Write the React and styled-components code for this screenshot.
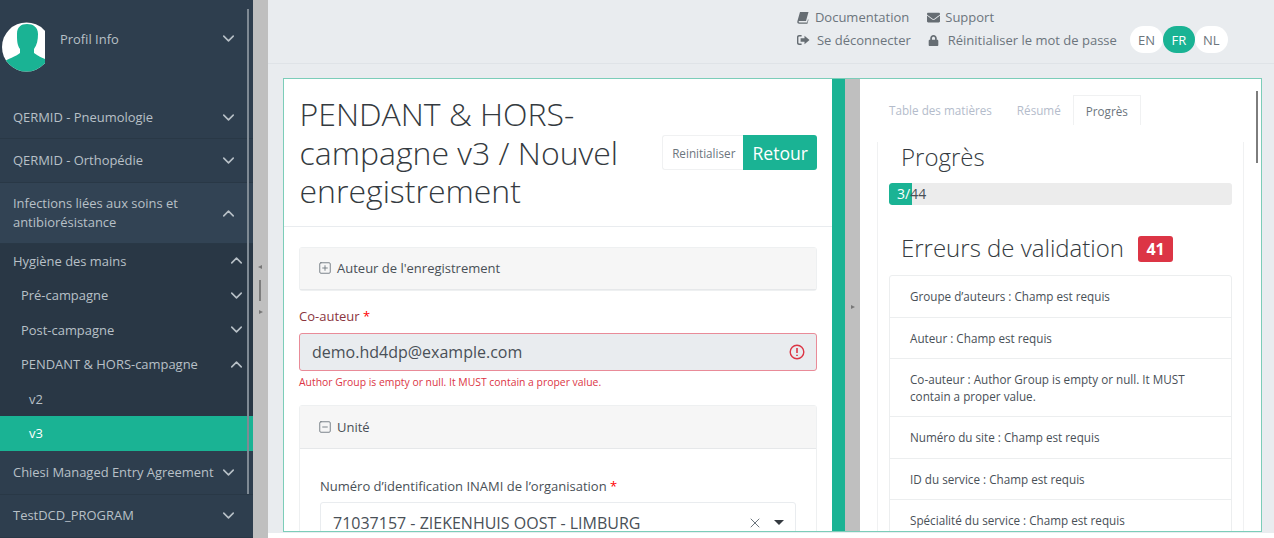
import React from "react";
import styled, { createGlobalStyle } from "styled-components";
import { ChevronDown, ChevronUp, SquarePlus, SquareMinus, X } from "lucide-react";
import { FaEnvelope, FaLock } from "react-icons/fa";

const Global = createGlobalStyle`
  html, body { margin: 0; padding: 0; height: 538px; overflow: hidden; background: #fff; }
  * { box-sizing: border-box; }
  body { font-family: "Open Sans", "Liberation Sans", sans-serif; color: #495057; }
`;

const Page = styled.div`
  display: flex;
  width: 1274px;
  height: 538px;
  overflow: hidden;
`;

const Sidebar = styled.nav`
  position: relative;
  flex: 0 0 253px;
  height: 538px;
  background: #2e3e4e;
  color: #b8c0c7;
  font-size: 12.95px;
  overflow: hidden;
`;

const Thumb = styled.div`
  position: absolute;
  top: 9px;
  right: 4px;
  width: 2px;
  height: 485px;
  background: #7f8a94;
`;

const Profile = styled.div`
  display: flex;
  align-items: center;
  height: 97px;
  padding: 0 15px 20px 2px;
`;

const Avatar = styled.svg`
  flex: none;
  width: 43px;
  height: 50px;
  margin: 16px 15px 0 0;
`;

const ProfileName = styled.span`
  flex: 1;
`;

const Group = styled.div`
  display: flex;
  align-items: center;
  justify-content: space-between;
  min-height: ${(p) => p.$h || 43}px;
  padding: ${(p) => (p.$open ? 1 : 0)}px 15px 0 13px;
  line-height: 19px;
  border-bottom: 1px solid #293846;
  background: ${(p) => (p.$open ? "#324354" : "transparent")};
`;

const GroupLabel = styled.span`
  max-width: 190px;
  white-space: ${(p) => (p.$nowrap ? "nowrap" : "normal")};
`;

const Sub = styled.div`
  background: #293745;
`;

const SubRow = styled.div`
  display: flex;
  align-items: center;
  justify-content: space-between;
  height: 34.5px;
  padding: 0 7px 0 ${(p) => p.$indent}px;
  background: ${(p) => (p.$active ? "#1ab394" : "transparent")};
  color: ${(p) => (p.$active ? "#fff" : "#b8c0c7")};
`;

const Gutter = styled.div`
  position: relative;
  flex: 0 0 15px;
  background: #bfbfbf;
`;

const Arrow = styled.span`
  position: absolute;
  left: ${(p) => p.$left}px;
  top: ${(p) => p.$top}px;
  width: 0;
  height: 0;
  border-top: 2.5px solid transparent;
  border-bottom: 2.5px solid transparent;
  ${(p) => (p.$dir === "left" ? "border-right: 4px solid #777;" : "border-left: 4px solid #777;")}
`;

const Handle = styled.span`
  position: absolute;
  left: 6px;
  top: 280px;
  width: 2px;
  height: 21px;
  background: #7d7d7d;
`;

const Main = styled.div`
  flex: 1;
  display: flex;
  flex-direction: column;
  min-width: 0;
  height: 533px;
  background: #e9ecef;
`;

const Header = styled.header`
  flex: 0 0 64px;
  display: flex;
  justify-content: flex-end;
  align-items: center;
  padding: 0 46.5px 6px 0;
  border-bottom: 1px solid #dfe3e7;
  font-size: 13px;
  color: #6c757d;
`;

const Links = styled.div`
  display: flex;
  flex-direction: column;
  gap: 5px;
  margin-right: 13.5px;
`;

const LinkRow = styled.div`
  display: flex;
  align-items: center;
  height: 18px;
`;

const TopLink = styled.span`
  display: inline-flex;
  align-items: center;
  gap: ${(p) => p.$gap || 6}px;
  margin-right: ${(p) => p.$mr || 0}px;
  white-space: nowrap;
  svg { flex: none; color: #666d73; }
`;

const Lang = styled.div`
  display: flex;
  margin-top: 22px;
`;

const LangBtn = styled.span`
  display: flex;
  align-items: center;
  justify-content: center;
  width: 32.4px;
  height: 27px;
  border-radius: 14px;
  font-size: 13px;
  background: ${(p) => (p.$on ? "#1ab394" : "#fff")};
  color: ${(p) => (p.$on ? "#fff" : "#6c757d")};
  position: relative;
  z-index: ${(p) => (p.$on ? 1 : 0)};
`;

const Frame = styled.div`
  display: flex;
  margin: 14px 12px 0 15px;
  height: 454px;
  border: 1px solid #7ccdb9;
  background: #fff;
  overflow: hidden;
`;

const Left = styled.section`
  flex: 0 0 548px;
  overflow: hidden;
`;

const TitleBar = styled.div`
  display: flex;
  align-items: center;
  justify-content: space-between;
  height: 148px;
  padding: 1px 15px 0 15.5px;
  border-bottom: 1px solid #e9ecef;
`;

const Title = styled.h1`
  margin: 0;
  width: 340px;
  font-size: 32px;
  font-weight: 300;
  line-height: 38.4px;
  color: #343a40;
`;

const Actions = styled.div`
  display: flex;
  height: 35px;
  margin-top: -1px;
`;

const ResetBtn = styled.span`
  display: flex;
  align-items: center;
  padding: 0 8px 0 9px;
  font-size: 11.7px;
  border: 1px solid #f0f1f2;
  border-right: none;
  border-radius: 3px 0 0 3px;
  color: #6c757d;
`;

const BackBtn = styled.span`
  display: flex;
  align-items: center;
  padding: 0 9px;
  font-size: 17.6px;
  background: #1ab394;
  color: #fff;
  border-radius: 0 3px 3px 0;
`;

const Form = styled.div`
  padding: 20px 15px 0 15px;
`;

const Card = styled.div`
  border: 1px solid #eef0f1;
  border-radius: 3px;
  background: #fff;
`;

const CardHead = styled.div`
  display: flex;
  align-items: center;
  gap: 5px;
  height: ${(p) => p.$h}px;
  padding: 0 18px 1px;
  background: #f6f6f6;
  border-bottom: 1px solid #e6e8ea;
  font-size: 13px;
  color: #495057;
  svg { color: #6c757d; }
`;

const FieldLabel = styled.div`
  margin: 16px 0 ${(p) => (p.$err ? 8 : 7)}px;
  font-size: 13px;
  line-height: 18px;
  color: ${(p) => (p.$err ? "#8a3540" : "#495057")};
`;

const Star = styled.span`
  color: #f00;
`;

const ErrInput = styled.div`
  display: flex;
  align-items: center;
  justify-content: space-between;
  height: 38px;
  padding: 0 11px 0 12px;
  background: #e9ecef;
  border: 1px solid #e98b98;
  border-radius: 3px;
  font-size: 16px;
  color: #495057;
`;

const ErrMsg = styled.div`
  margin: 3px 0 15px;
  font-size: 10.4px;
  line-height: 16px;
  color: #dc3545;
`;

const CardBody = styled.div`
  padding: 12px 20px 0;
  height: 200px;
`;

const Select = styled.div`
  display: flex;
  align-items: center;
  height: 38px;
  padding: 3px 11px 0 12px;
  border: 1px solid #e9ecef;
  border-radius: 3px;
  font-size: 16px;
  color: #495057;
  white-space: nowrap;
`;

const SelectText = styled.span`
  flex: 1;
`;

const Caret = styled.span`
  margin-left: 11px;
  width: 0;
  height: 0;
  border-left: 5px solid transparent;
  border-right: 5px solid transparent;
  border-top: 5px solid #343a40;
`;

const GreenBar = styled.div`
  flex: 0 0 13px;
  background: #1ab394;
`;

const GrayBar = styled.div`
  position: relative;
  flex: 0 0 15px;
  background: #bfbfbf;
`;

const Right = styled.section`
  position: relative;
  flex: 1;
  min-width: 0;
  padding: 16px 17px 0 17px;
  overflow: hidden;
`;

const RightThumb = styled.div`
  position: absolute;
  top: 12px;
  right: 3px;
  width: 2.5px;
  height: 72px;
  background: #7d7d7d;
`;

const Tabs = styled.div`
  display: flex;
  align-items: flex-end;
  height: 30px;
  font-size: 11.7px;
`;

const Tab = styled.span`
  display: flex;
  align-items: center;
  height: 30px;
  padding: 0 ${(p) => (p.$first ? 13 : 12)}px 0 12px;
  color: ${(p) => (p.$on ? "#6c757d" : "#b4bccb")};
  background: #fff;
  ${(p) => p.$on && "border: 1px solid #f0f1f2; border-bottom: none;"}
`;

const TabBody = styled.div`
  height: 500px;
  padding: 0 11px;
  border-left: 1px solid #f0f1f2;
  border-right: 1px solid #f0f1f2;
`;

const H2 = styled.h2`
  display: flex;
  align-items: flex-start;
  margin: ${(p) => p.$top}px 0 0;
  padding-left: 12px;
  font-size: 24px;
  font-weight: 300;
  color: #343a40;
  line-height: 29px;
`;

const Progress = styled.div`
  position: relative;
  height: 22px;
  margin-top: 12px;
  background: #ececec;
  border-radius: 3px;
  font-size: 14px;
  line-height: 22px;
  overflow: hidden;
`;

const ProgressFill = styled.div`
  height: 100%;
  background: #1ab394;
  border-radius: 3px 0 0 3px;
`;

const ProgressText = styled.span`
  position: absolute;
  left: 8px;
  top: 0;
  color: #495057;
`;

const ProgressDone = styled.span`
  color: #fff;
`;

const Badge = styled.span`
  display: inline-flex;
  align-items: center;
  justify-content: center;
  width: 35px;
  height: 26px;
  margin: 3px 0 0 14px;
  border-radius: 3px;
  background: #dc3545;
  color: #fff;
  font-size: 16px;
  font-weight: 700;
`;

const ErrList = styled.ul`
  margin: 13px 0 0;
  padding: 0;
  list-style: none;
  border: 1px solid #eceeef;
  border-radius: 3px;
`;

const ErrItem = styled.li`
  padding: 12px 20px;
  font-size: 11.7px;
  line-height: 16.5px;
  color: #495057;
  border-bottom: 1px solid #eceeef;
`;

const Icon = styled.svg`
  display: block;
`;

const Avatarpic = () => (
  <Avatar viewBox="0 0 43 50">
    <defs>
      <clipPath id="av"><circle cx="24.5" cy="25" r="24.5" /></clipPath>
    </defs>
    <g clipPath="url(#av)">
      <rect width="43" height="50" fill="#fff" />
      <path d="M0 41 C6 36 14 35 18 31 L18 27 C15 23 15 18 15 12 C15 5 19 2 25 2 C31 2 36 5 36 12 C36 18 35 23 32 27 L32 31 C36 34 40 36 43 37 L43 50 L0 50 Z" fill="#1ab394" />
    </g>
  </Avatar>
);

const Book = () => (
  <Icon width="12" height="13" viewBox="0 0 12 13">
    <path d="M3 1h8.5L9 10H2.4c-.5 0-.8.3-.8.8 0 .5.4.7.9.7h7.6l.9-3.2.5.5-1.1 4H2.2C1 12.8.1 12 .3 10.6z" fill="currentColor" />
  </Icon>
);

const SignOut = () => (
  <Icon width="13" height="12" viewBox="0 0 13 12">
    <path d="M4.6 1v1.4H2.2c-.5 0-.8.3-.8.8v5.600c0 .5.3.8.8.8h2.4V11H2C.9 11 0 10.100 0 9V3c0-1.100.9-2 2-2z" fill="currentColor" />
    <path d="M7.500 1.800 12.500 6l-5 4.200V7.700H3.600V4.300h3.900z" fill="currentColor" />
  </Icon>
);

const ErrIcon = () => (
  <Icon width="16" height="16" viewBox="0 0 16 16" fill="none">
    <circle cx="8" cy="8" r="6.800" stroke="#dc3545" strokeWidth="1.400" />
    <path d="M8 4v5M8 10.800v1.300" stroke="#dc3545" strokeWidth="1.600" />
  </Icon>
);

const Chev = ({ up }) => {
  const C = up ? ChevronUp : ChevronDown;
  return <C size={19} strokeWidth={2} color="#b8c0c7" />;
};

const errors = [
  "Groupe d’auteurs : Champ est requis",
  "Auteur : Champ est requis",
  "Co-auteur : Author Group is empty or null. It MUST contain a proper value.",
  "Numéro du site : Champ est requis",
  "ID du service : Champ est requis",
  "Spécialité du service : Champ est requis",
];

export default function App() {
  return (
    <Page>
      <Global />
      <Sidebar>
        <Profile>
          <Avatarpic />
          <ProfileName>Profil Info</ProfileName>
          <Chev />
        </Profile>
        <Group $h={42}><GroupLabel>QERMID - Pneumologie</GroupLabel><Chev /></Group>
        <Group $h={44}><GroupLabel>QERMID - Orthopédie</GroupLabel><Chev /></Group>
        <Group $h={60.5} $open><GroupLabel>Infections liées aux soins et antibiorésistance</GroupLabel><Chev up /></Group>
        <Sub>
          <SubRow $indent={13}>Hygiène des mains<Chev up /></SubRow>
          <SubRow $indent={21}>Pré-campagne<Chev /></SubRow>
          <SubRow $indent={21}>Post-campagne<Chev /></SubRow>
          <SubRow $indent={21}>PENDANT &amp; HORS-campagne<Chev up /></SubRow>
          <SubRow $indent={29}>v2</SubRow>
          <SubRow $indent={29} $active>v3</SubRow>
        </Sub>
        <Group $h={44}><GroupLabel $nowrap>Chiesi Managed Entry Agreement</GroupLabel><Chev /></Group>
        <Group $h={43}><GroupLabel>TestDCD_PROGRAM</GroupLabel><Chev /></Group>
        <Thumb />
      </Sidebar>
      <Gutter>
        <Arrow $dir="left" $left={5} $top={265} />
        <Handle />
        <Arrow $dir="right" $left={6} $top={310} />
      </Gutter>
      <Main>
        <Header>
          <Links>
            <LinkRow>
              <TopLink $mr={18}><Book />Documentation</TopLink>
              <TopLink $gap={5}><FaEnvelope size={13} />Support</TopLink>
            </LinkRow>
            <LinkRow>
              <TopLink $mr={17} $gap={7}><SignOut />Se déconnecter</TopLink>
              <TopLink $gap={9}><FaLock size={11} />Réinitialiser le mot de passe</TopLink>
            </LinkRow>
          </Links>
          <Lang>
            <LangBtn>EN</LangBtn>
            <LangBtn $on>FR</LangBtn>
            <LangBtn>NL</LangBtn>
          </Lang>
        </Header>
        <Frame>
          <Left>
            <TitleBar>
              <Title>PENDANT &amp; HORS-campagne v3 / Nouvel enregistrement</Title>
              <Actions>
                <ResetBtn>Reinitialiser</ResetBtn>
                <BackBtn>Retour</BackBtn>
              </Actions>
            </TitleBar>
            <Form>
              <Card>
                <CardHead $h={42}><SquarePlus size={14} strokeWidth={1.5} />Auteur de l'enregistrement</CardHead>
              </Card>
              <FieldLabel $err>Co-auteur <Star>*</Star></FieldLabel>
              <ErrInput>demo.hd4dp@example.com<ErrIcon /></ErrInput>
              <ErrMsg>Author Group is empty or null. It MUST contain a proper value.</ErrMsg>
              <Card>
                <CardHead $h={43}><SquareMinus size={14} strokeWidth={1.5} />Unité</CardHead>
                <CardBody>
                  <FieldLabel>Numéro d’identification INAMI de l’organisation <Star>*</Star></FieldLabel>
                  <Select>
                    <SelectText>71037157 - ZIEKENHUIS OOST - LIMBURG</SelectText>
                    <X size={16} strokeWidth={1.5} color="#6c757d" />
                    <Caret />
                  </Select>
                </CardBody>
              </Card>
            </Form>
          </Left>
          <GreenBar />
          <GrayBar><Arrow $dir="right" $left={6} $top={226} /></GrayBar>
          <Right>
            <Tabs>
              <Tab $first>Table des matières</Tab>
              <Tab>Résumé</Tab>
              <Tab $on>Progrès</Tab>
            </Tabs>
            <TabBody>
              <H2 $top={17}>Progrès</H2>
              <Progress>
                <ProgressFill style={{ width: `${(3 / 44) * 100}%` }} />
                <ProgressText><ProgressDone>3/</ProgressDone>44</ProgressText>
              </Progress>
              <H2 $top={28}>Erreurs de validation<Badge>41</Badge></H2>
              <ErrList>
                {errors.map((e) => <ErrItem key={e}>{e}</ErrItem>)}
              </ErrList>
            </TabBody>
            <RightThumb />
          </Right>
        </Frame>
      </Main>
    </Page>
  );
}
